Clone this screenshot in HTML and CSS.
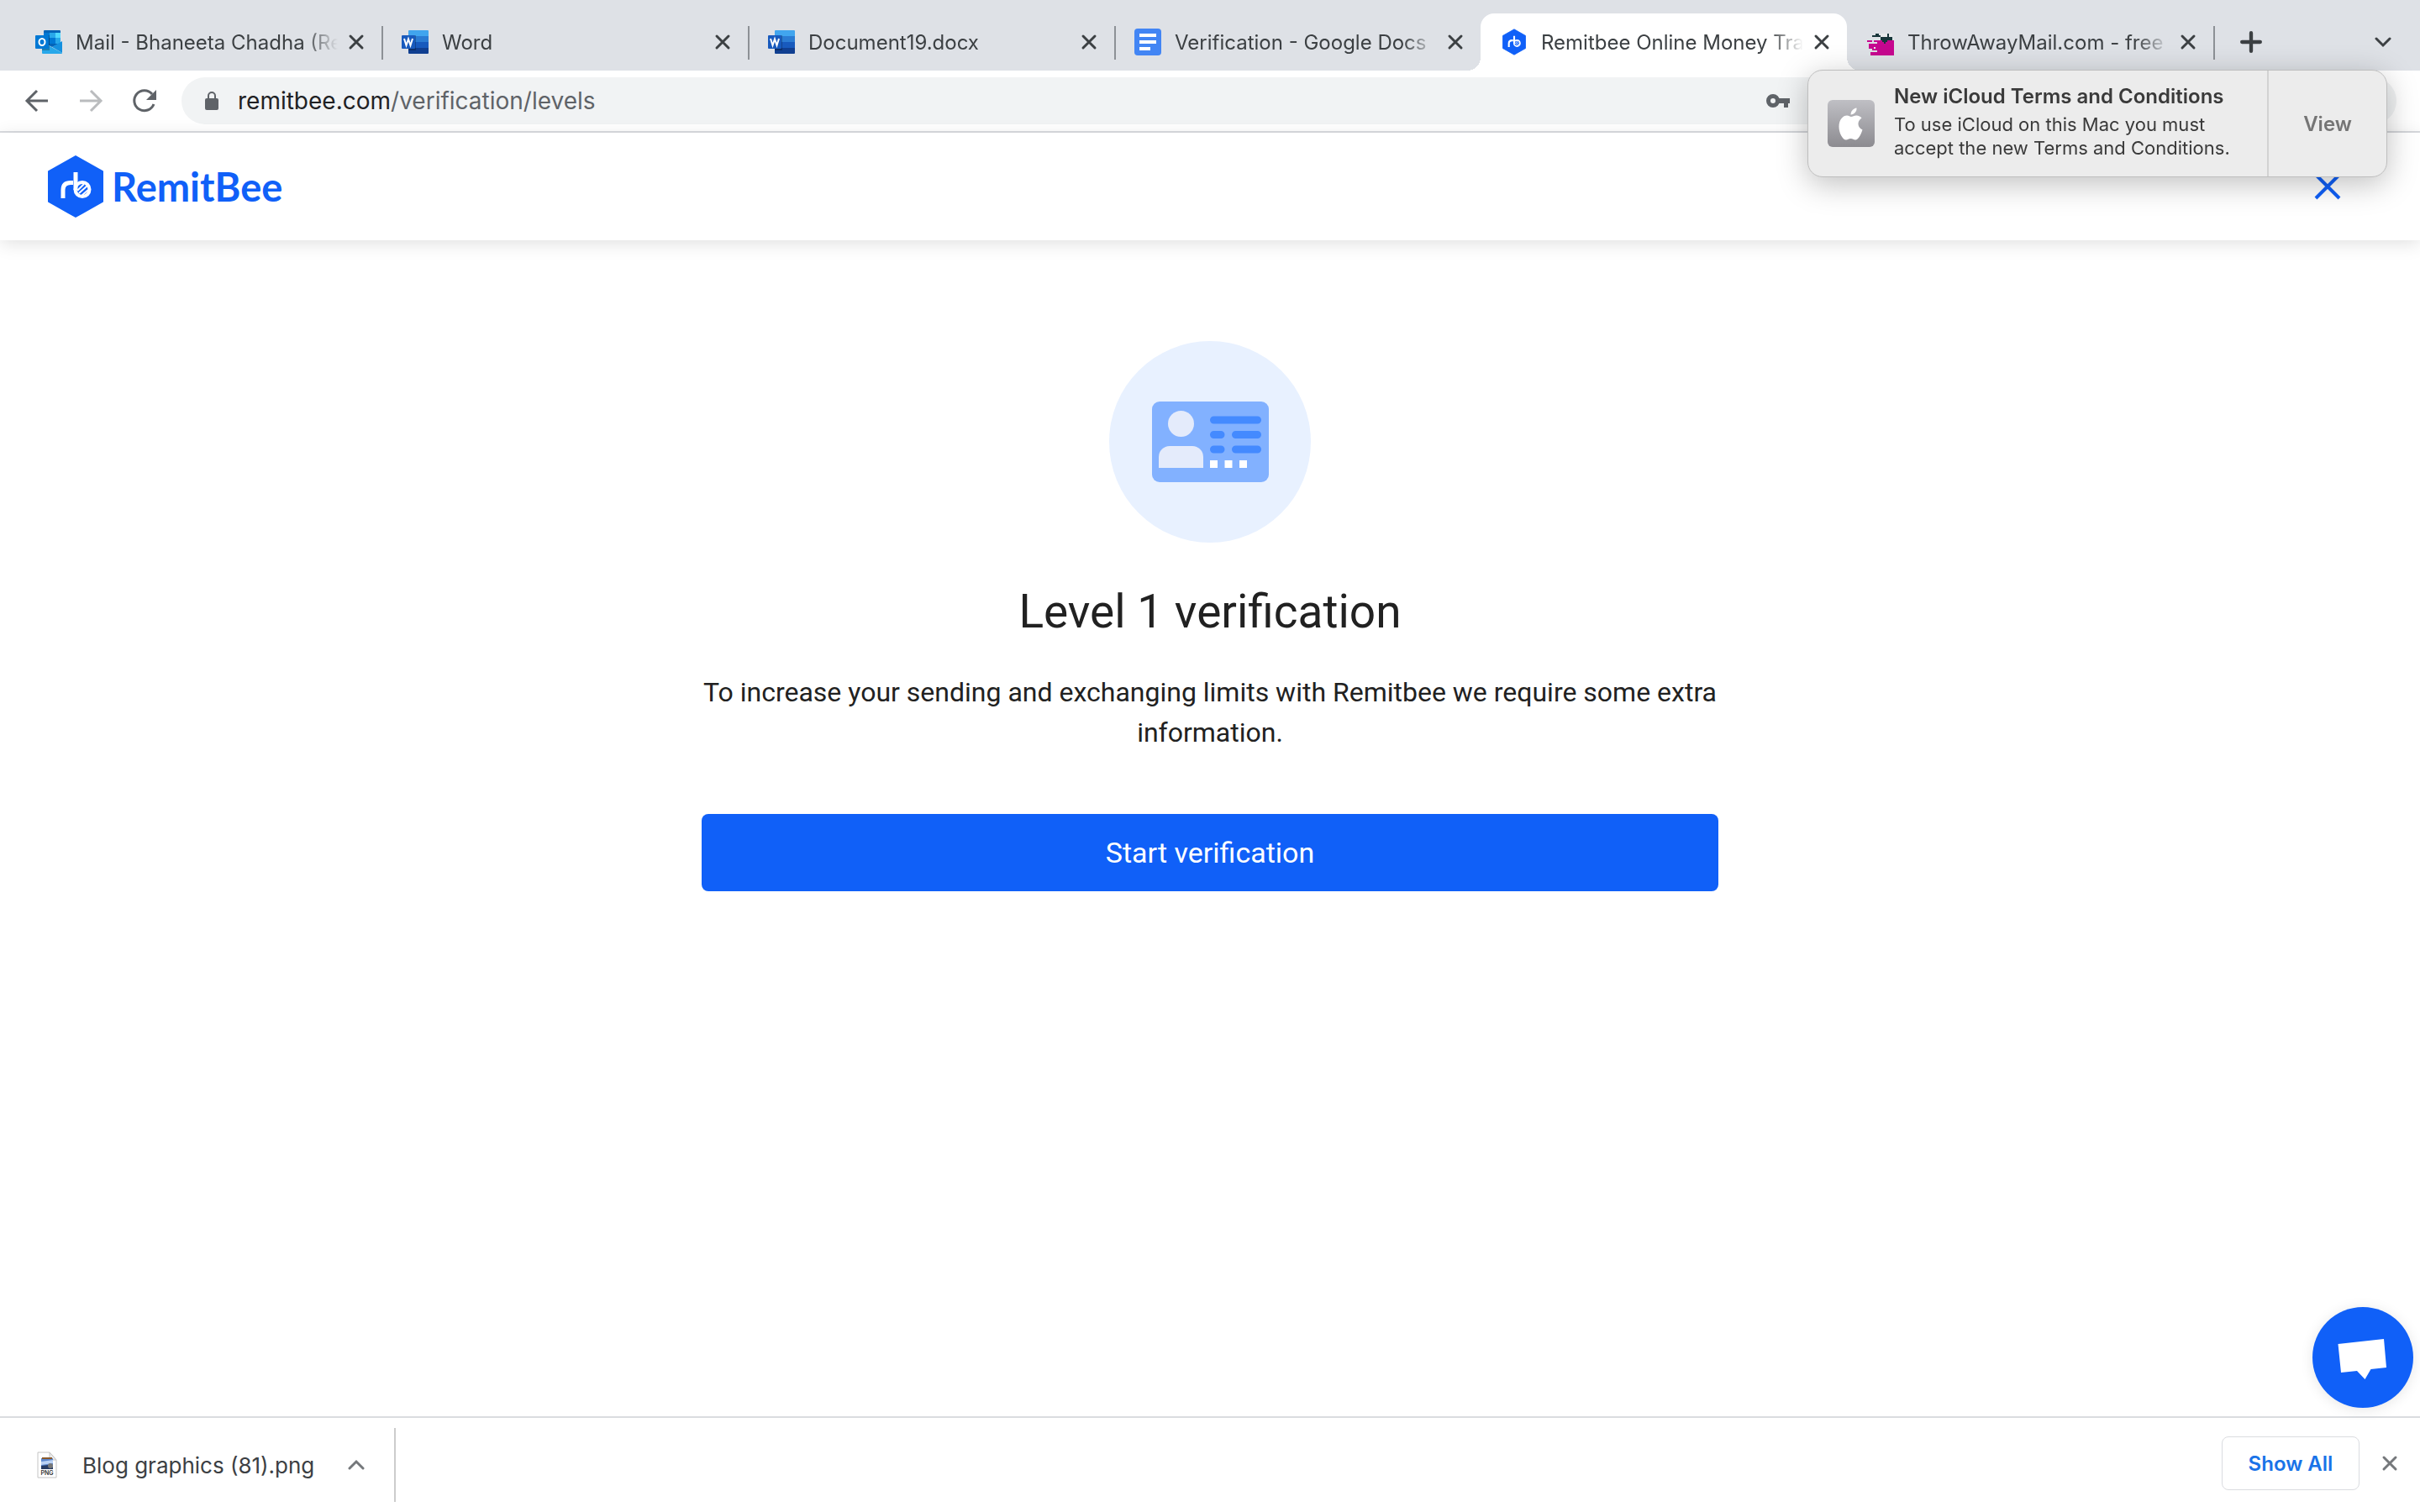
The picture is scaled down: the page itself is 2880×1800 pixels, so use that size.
FILE: index.html
```html
<!DOCTYPE html>
<html lang="en">
<head>
    <meta charset="UTF-8">
    <meta name="viewport" content="width=device-width, initial-scale=1.0">
    <title>Remitbee Online Money Transfer</title>
    <link rel="stylesheet" href="styles.css">
</head>
<body>
    <!-- shared icon shapes -->
    <svg class="defs" width="0" height="0" aria-hidden="true">
        <symbol id="x" viewBox="0 0 20 20"><path d="M3 3l14 14M17 3L3 17" fill="none" stroke="currentColor" stroke-width="3" stroke-linecap="round"/></symbol>
        <symbol id="bee" viewBox="0 0 66 76">
            <path d="M33 2 L65 20 V56 L33 74 L1 56 V20 Z" fill="#1060f8" stroke="#1060f8" stroke-width="2" stroke-linejoin="round"/>
            <path d="M18 52V42Q18 33.500 27 33.500H30M33 21V42" fill="none" stroke="#fff" stroke-width="5"/>
            <circle cx="41" cy="41.500" r="8.500" fill="none" stroke="#fff" stroke-width="4"/>
            <path d="M35 43l8-8M37 46l10-9M40 49l8-7" stroke="#fff" stroke-width="2"/>
        </symbol>
        <symbol id="word" viewBox="0 0 32 32">
            <path d="M9 2h22a1 1 0 0 1 1 1v6H8V3a1 1 0 0 1 1-1z" fill="#41a5ee"/>
            <path d="M8 9h24v7H8z" fill="#2b7cd3"/>
            <path d="M8 16h24v7H8z" fill="#185abd"/>
            <path d="M8 23h24v6a1 1 0 0 1-1 1H9a1 1 0 0 1-1-1z" fill="#103f91"/>
            <path d="M8 8h9v18H8z" fill="#000" opacity=".25"/>
            <rect y="8" width="16" height="16" rx="1" fill="#185abd"/>
            <path d="M3 12l2.500 8L8 12.500 10.500 20 13 12" fill="none" stroke="#fff" stroke-width="2"/>
        </symbol>
    </svg>

    <div class="tab-strip">
        <div class="tab">
            <svg class="favicon" viewBox="0 0 32 32">
                <path d="M11 2h18a1 1 0 0 1 1 1v14l-10 5-10-5V3a1 1 0 0 1 1-1z" fill="#0364b8"/>
                <path d="M10 5h7v6h-7zM17 11h7v7h-7z" fill="#0078d4"/>
                <path d="M17 5h7v6h-7zM24 11h6v7h-6z" fill="#28a8ea"/>
                <path d="M24 5h6v6h-6z" fill="#50d9ff"/>
                <path d="M10 18l10 5-4 5H8V17z" fill="#0a2767" opacity=".5"/>
                <path d="M32 15v14L20 22z" fill="#1490df"/>
                <path d="M8 16l24 13a1 1 0 0 1-1 1H9a1 1 0 0 1-1-1z" fill="#28a8ea"/>
                <path d="M8 8h9v18H8z" fill="#000" opacity=".25"/>
                <rect y="8" width="16" height="16" rx="1" fill="#0078d4"/>
                <ellipse cx="8" cy="16" rx="3.500" ry="4" fill="none" stroke="#fff" stroke-width="2"/>
            </svg>
            <span class="tab-title">Mail - Bhaneeta Chadha (Remitbee)</span>
            <button class="tab-close" aria-label="Close tab"><svg><use href="#x"/></svg></button>
        </div>
        <div class="tab">
            <svg class="favicon"><use href="#word"/></svg>
            <span class="tab-title">Word</span>
            <button class="tab-close" aria-label="Close tab"><svg><use href="#x"/></svg></button>
        </div>
        <div class="tab">
            <svg class="favicon"><use href="#word"/></svg>
            <span class="tab-title">Document19.docx</span>
            <button class="tab-close" aria-label="Close tab"><svg><use href="#x"/></svg></button>
        </div>
        <div class="tab no-line">
            <svg class="favicon" viewBox="0 0 32 32">
                <rect width="32" height="32" rx="4" fill="#4285f4"/>
                <path d="M6 6h20v4H6zM6 14h20v4H6zM6 22h13v4H6z" fill="#fff"/>
            </svg>
            <span class="tab-title">Verification - Google Docs</span>
            <button class="tab-close" aria-label="Close tab"><svg><use href="#x"/></svg></button>
        </div>
        <div class="tab active no-line">
            <svg class="favicon"><use href="#bee"/></svg>
            <span class="tab-title">Remitbee Online Money Transfer</span>
            <button class="tab-close" aria-label="Close tab"><svg><use href="#x"/></svg></button>
        </div>
        <div class="tab">
            <svg class="favicon" viewBox="0 0 32 32" shape-rendering="crispEdges">
                <path d="M16 6h14v6H16z" fill="#e8eaec"/>
                <path d="M0 14h6v2H0zM8 14h24v18H4v-4h8v-2H6v-2H2v-6h10v-2H8z" fill="#c6078f"/>
                <path d="M8 22h2v2H8z" fill="#e8eaec"/>
                <path d="M6 8h4V6h4v2h2v2H6zM16 10h8V6h2v4h4v4h-6v2h-2v2h-2v-2h-2v-2h-2z" fill="#17353a"/>
            </svg>
            <span class="tab-title">ThrowAwayMail.com - free temporary</span>
            <button class="tab-close" aria-label="Close tab"><svg><use href="#x"/></svg></button>
        </div>
        <button class="new-tab" aria-label="New tab"><svg viewBox="0 0 24 24"><path d="M12 2v20M2 12h20" stroke="currentColor" stroke-width="4" stroke-linecap="round"/></svg></button>
        <button class="tab-search" aria-label="Search tabs"><svg viewBox="0 0 20 20"><path d="M2 6l8 8 8-8" fill="none" stroke="currentColor" stroke-width="3" stroke-linecap="round"/></svg></button>
    </div>

    <div class="toolbar">
        <button class="tool" aria-label="Back"><svg viewBox="0 0 32 32"><path d="M29 16H4M16 4L4 16l12 12" fill="none" stroke="currentColor" stroke-width="3"/></svg></button>
        <button class="tool off" aria-label="Forward"><svg viewBox="0 0 32 32"><path d="M3 16h25M16 4l12 12-12 12" fill="none" stroke="currentColor" stroke-width="3"/></svg></button>
        <button class="tool" aria-label="Reload"><svg viewBox="0 0 32 32"><path d="M27 20A12 12 0 1 1 25 8" fill="none" stroke="currentColor" stroke-width="3"/><path d="M30 3v12H18z" fill="currentColor"/></svg></button>
        <div class="omnibox">
            <svg class="lock" viewBox="0 0 18 24"><rect x="1" y="9" width="16" height="14" rx="2" fill="#5f6368"/><path d="M5 10V6a4 4 0 0 1 8 0v4" fill="none" stroke="#5f6368" stroke-width="2"/></svg>
            <span class="url"><b>remitbee.com</b>/verification/levels</span>
            <svg class="key" viewBox="0 0 28 18"><circle cx="8" cy="9" r="5.500" fill="none" stroke="#5f6368" stroke-width="5"/><path d="M13 6h15v6h-2v5h-5v-5h-8z" fill="#5f6368"/></svg>
        </div>
    </div>

    <header class="site-header">
        <a class="logo" href="#"><svg><use href="#bee"/></svg><span>RemitBee</span></a>
        <button class="close-page" aria-label="Close"><svg viewBox="0 0 32 32"><path d="M2 2l28 28M30 2L2 30" stroke="currentColor" stroke-width="4"/></svg></button>
    </header>

    <main class="content">
        <svg class="badge" viewBox="0 0 240 240">
            <circle cx="120" cy="120" r="120" fill="#e8f1ff"/>
            <rect x="51" y="72" width="139" height="96" rx="9" fill="#82b1ff"/>
            <circle cx="85.500" cy="98.500" r="15.500" fill="#e4ebfb"/>
            <path d="M59 151v-13a13 13 0 0 1 13-13h27a13 13 0 0 1 13 13v13z" fill="#e4ebfb"/>
            <path d="M124.500 94h52M124.500 111.500h8.500M150.500 111.500h26M124.500 129h8.500M150.500 129h26" stroke="#448aff" stroke-width="9" stroke-linecap="round"/>
            <path d="M120 142h9v9h-9zM137.500 142h9v9h-9zM155 142h9v9h-9z" fill="#fff"/>
        </svg>
        <h1>Level 1 verification</h1>
        <p>To increase your sending and exchanging limits with Remitbee we require some extra information.</p>
        <button class="start-btn">Start verification</button>
    </main>

    <button class="chat" aria-label="Open chat"><svg viewBox="0 0 120 120"><path d="M30.500 44l54.500-6 3 34-18.500 2-7 12-9.500-10-19 2z" fill="#fff"/></svg></button>

    <footer class="downloads">
        <div class="download">
            <svg class="file" viewBox="0 0 24 32">
                <path d="M1 1h14l8 9v21H1z" fill="#fff" stroke="#c4c4c4"/>
                <path d="M15 1v9h8z" fill="#eee" stroke="#c4c4c4"/>
                <path d="M5 8h14v13H5z" fill="#5b87cf"/><path d="M6 7h12v2H6z" fill="#8a5a2c"/>
                <path d="M5 12l14-2v4L5 16z" fill="#b9d1f4"/><path d="M5 17l8-1 6 3v2H5z" fill="#263b63"/>
                <circle cx="16" cy="17" r="3" fill="#777"/>
                <text x="12" y="28" text-anchor="middle" class="file-type">PNG</text>
            </svg>
            <a href="#">Blog graphics (81).png</a>
            <button aria-label="Download options"><svg viewBox="0 0 20 20"><path d="M2 14l8-8 8 8" fill="none" stroke="currentColor" stroke-width="3" stroke-linecap="round"/></svg></button>
        </div>
        <button class="show-all">Show All</button>
        <button class="close-bar" aria-label="Close downloads bar"><svg><use href="#x"/></svg></button>
    </footer>

    <div class="notice" role="alert">
        <svg class="apple" viewBox="0 0 56 56">
            <defs><linearGradient id="grey" x2="0" y2="1"><stop stop-color="#bfbfc4"/><stop offset="1" stop-color="#8c8b90"/></linearGradient></defs>
            <rect width="56" height="56" rx="6" fill="url(#grey)"/>
            <path d="M28 20c2 0 4-2 7-1.500 3 .5 4.500 1.500 5.500 3-6 4-5 11.500 1 14-2 6-5 12-8.500 12-2 0-3-1.500-5.500-1.500s-3.500 1.500-5.500 1.500c-4 0-8.500-8-8.500-15.500 0-9 5-13.500 9.500-13.500 2.500 0 3.500 1.500 5 1.500z" fill="#fff"/>
            <path d="M27.500 17.500c0-4 3-7.500 7-8 .5 4-3 8-7 8z" fill="#fff"/>
        </svg>
        <div class="notice-text">
            <h2>New iCloud Terms and Conditions</h2>
            <p>To use iCloud on this Mac you must accept the new Terms and Conditions.</p>
        </div>
        <button class="view">View</button>
    </div>
</body>
</html>
```
FILE: styles.css
```css
* { box-sizing: border-box; }
body { margin: 0; min-height: 100vh; display: flex; flex-direction: column; background: #fff; color: #202124; font-family: Inter, sans-serif; }
button { border: none; background: none; padding: 0; font: inherit; color: inherit; cursor: pointer; display: flex; align-items: center; justify-content: center; }
a { text-decoration: none; color: inherit; }
svg { display: block; flex: none; }
.defs { position: absolute; }

/* browser tabs */
.tab-strip { display: flex; height: 84px; padding: 16px 34px 0 18px; background: #dee1e6; color: #3c4043; }
.tab { position: relative; display: flex; align-items: center; flex: 0 1 436px; min-width: 0; padding: 0 20px 0 24px; font-size: 24px; }
.tab::after { content: ""; position: absolute; right: -2px; top: 15px; width: 2px; height: 40px; background: #8d9196; }
.tab.no-line::after { display: none; }
.tab.active { background: #fff; border-radius: 16px 16px 0 0; }
.tab.active::before { content: ""; position: absolute; left: -16px; right: -16px; bottom: 0; height: 16px; background: radial-gradient(circle at 0 0, transparent 16px, #fff 16px) left / 16px 16px no-repeat, radial-gradient(circle at 100% 0, transparent 16px, #fff 16px) right / 16px 16px no-repeat; }
.favicon { width: 32px; height: 32px; }
.tab-title { flex: 1; margin: 0 12px 0 16px; overflow: hidden; white-space: nowrap; -webkit-mask-image: linear-gradient(to right, #000 87%, transparent); mask-image: linear-gradient(to right, #000 87%, transparent); }
.tab-close svg { width: 20px; height: 20px; }
.new-tab { margin-left: 32px; }
.new-tab svg { width: 26px; height: 26px; }
.tab-search { margin-left: auto; }
.tab-search svg { width: 20px; height: 20px; }

/* address bar */
.toolbar { display: flex; align-items: center; height: 74px; padding: 0 28px; border-bottom: 2px solid #dadce0; color: #5f6368; }
.tool { width: 32px; margin-right: 32px; }
.tool svg { width: 32px; height: 32px; }
.tool:nth-child(3) { margin-right: 28px; }
.off { color: #babcbe; }
.omnibox { flex: 1; display: flex; align-items: center; height: 56px; padding: 0 24px 0 27px; border-radius: 28px; background: #f1f3f4; font-size: 28px; }
.lock { width: 18px; height: 24px; }
.url { margin-left: 22px; color: #5f6368; }
.url b { font-weight: 400; color: #202124; }
.key { width: 28px; height: 18px; margin-left: auto; margin-right: 698px; }

/* site */
.site-header { display: flex; align-items: center; justify-content: space-between; height: 128px; padding: 0 94px 0 57px; box-shadow: 0 4px 20px rgba(0,0,0,0.12); }
.logo { display: flex; align-items: center; gap: 10px; color: #1060f8; font: 700 47px Lato, sans-serif; }
.logo svg { width: 66px; height: 76px; }
.close-page { color: #1060f8; }
.close-page svg { width: 32px; height: 32px; }
.content { flex: 1; width: 42%; margin: 0 auto; padding-top: 120px; display: flex; flex-direction: column; align-items: center; font-family: Roboto, sans-serif; color: #212121; text-align: center; }
.badge { width: 240px; height: 240px; }
.content h1 { margin: 50px 0 0; font-size: 55px; font-weight: 400; line-height: 64px; }
.content p { margin: 40px 0 73px; font-size: 32px; line-height: 48px; }
.start-btn { width: 100%; height: 92px; border-radius: 8px; background: #1060f8; color: #fff; font-size: 34px; }
.chat { position: fixed; right: 8px; bottom: 124px; width: 120px; height: 120px; border-radius: 50%; background: #1060f8; box-shadow: 0 2px 16px rgba(0,0,0,0.1); }
.chat svg { width: 120px; height: 120px; }

/* downloads bar */
.downloads { display: flex; align-items: center; height: 114px; padding-right: 26px; border-top: 2px solid #dadce0; color: #3c4043; }
.download { display: flex; align-items: center; height: 88px; margin-right: auto; padding: 0 35px 0 44px; border-right: 2px solid #ccc; font-size: 26px; }
.file { width: 24px; height: 32px; margin-right: 30px; }
.file-type { font-size: 7px; font-weight: 600; fill: #333; }
.download button { margin-left: 40px; color: #75787b; }
.download button svg, .close-bar svg { width: 20px; height: 20px; }
.show-all { width: 164px; height: 64px; margin-bottom: 4px; border: 1px solid #dadce0; border-radius: 8px; color: #1a73e8; font-size: 24px; font-weight: 600; }
.close-bar { margin: 0 0 4px 26px; color: #75787b; }

/* macOS notification over the page */
.notice { position: fixed; top: 83px; right: 39px; width: 690px; height: 128px; display: flex; align-items: center; padding-left: 23px; border: 1px solid #bebebe; border-radius: 18px; background: #ececec; color: #3a3a3a; box-shadow: 0 8px 36px rgba(0,0,0,0.25); }
.apple { width: 56px; height: 56px; }
.notice-text { flex: 1; margin-left: 23px; padding-bottom: 4px; }
.notice h2 { margin: 0 0 4px; font-size: 24px; font-weight: 600; line-height: 30px; }
.notice p { margin: 0; font-size: 22px; line-height: 28px; }
.view { width: 142px; align-self: stretch; border-left: 2px solid #d2d2d2; color: #757575; font-size: 24px; font-weight: 600; }
```
